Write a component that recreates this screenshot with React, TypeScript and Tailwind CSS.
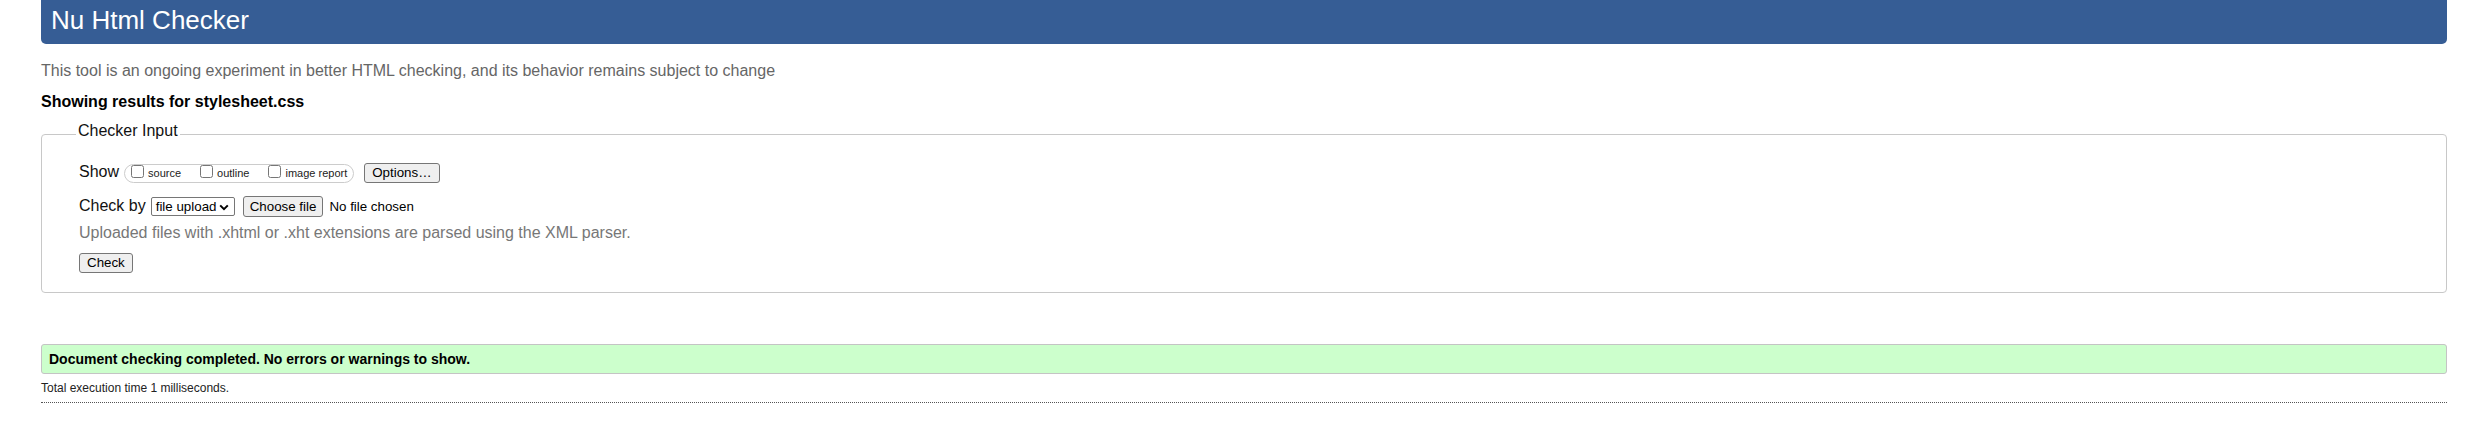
import React from 'react';

const btn =
  'flex items-center bg-[#efefef] border border-[#767676] rounded-[3px] text-[13.33px] text-black leading-none';

const ShowOption: React.FC<{ label: string }> = ({ label }) => (
  <label className="flex items-center gap-[4px]">
    <input type="checkbox" className="m-0 mb-[4px] w-[13px] h-[13px]" />
    <span className="text-[11px] leading-[13px]">{label}</span>
  </label>
);

const App: React.FC = () => {
  return (
    <div className="pl-[41px] pr-[40px] bg-white text-[#222] font-['Liberation_Sans',Arial,sans-serif] min-h-[430px]">
      <h1 className="h-[44px] pt-[7px] pl-[10px] rounded-b-[5px] bg-[#365d95] text-white text-[26px] leading-[26px] font-normal">
        Nu Html Checker
      </h1>

      <p className="mt-[17px] text-[16px] leading-[20px] text-[#666]">
        This tool is an ongoing experiment in better HTML checking, and its behavior remains subject to change
      </p>

      <p className="mt-[11px] text-[16px] leading-[20px] font-bold text-black">
        Showing results for stylesheet.css
      </p>

      <fieldset className="mt-[9px] border border-[#c8c8c8] rounded-[4px] pl-[34px] pr-[10px] pt-[16px] pb-[19px]">
        <legend className="px-[2px] pb-[6px] text-[16px] leading-[20px] text-[#111]">Checker Input</legend>

        <div className="pl-[3px]">
          <div className="flex items-center h-[20px]">
            <span className="mb-[2px] text-[16px] leading-[20px] text-[#111]">Show</span>
            <span className="ml-[5px] flex items-center gap-[19px] h-[19px] px-[6px] rounded-full border border-[#cccccc]">
              <ShowOption label="source" />
              <ShowOption label="outline" />
              <ShowOption label="image report" />
            </span>
            <button type="button" className={`${btn} ml-[10px] h-[20px] px-[7px]`}>
              Options…
            </button>
          </div>

          <div className="mt-[13px] flex items-center h-[21px]">
            <span className="mb-[1px] text-[16px] leading-[20px] text-[#111]">Check by</span>
            <span className="ml-[5px] flex items-center justify-between w-[84px] h-[19px] pl-[4px] pr-[5px] border border-[#767676] rounded-[2px] bg-white text-[13.33px] text-black">
              file upload
              <svg width="10" height="7" viewBox="0 0 10 7" className="mt-[1px]">
                <path d="M1.2 1.4 L5 5.2 L8.8 1.4" fill="none" stroke="#000" strokeWidth="2" />
              </svg>
            </span>
            <button type="button" className={`${btn} ml-[8px] h-[21px] px-[6px]`}>
              Choose file
            </button>
            <span className="ml-[6px] text-[13.33px] text-black">No file chosen</span>
          </div>

          <p className="mt-[6px] text-[16px] leading-[20px] text-[#777]">
            Uploaded files with .xhtml or .xht extensions are parsed using the XML parser.
          </p>

          <button type="button" className={`${btn} mt-[10px] h-[20px] px-[7px]`}>
            Check
          </button>
        </div>
      </fieldset>

      <div className="mt-[51px] h-[30px] flex items-center pl-[7px] bg-[#ccffcc] border border-[#c4c4c4] rounded-[3px]">
        <p className="text-[14px] font-bold text-black">Document checking completed. No errors or warnings to show.</p>
      </div>

      <p className="mt-[7px] text-[12px] leading-[14px] text-[#222]">Total execution time 1 milliseconds.</p>

      <hr className="mt-[7px] border-0 border-t border-dotted border-[#555]" />
    </div>
  );
};

export default App;
